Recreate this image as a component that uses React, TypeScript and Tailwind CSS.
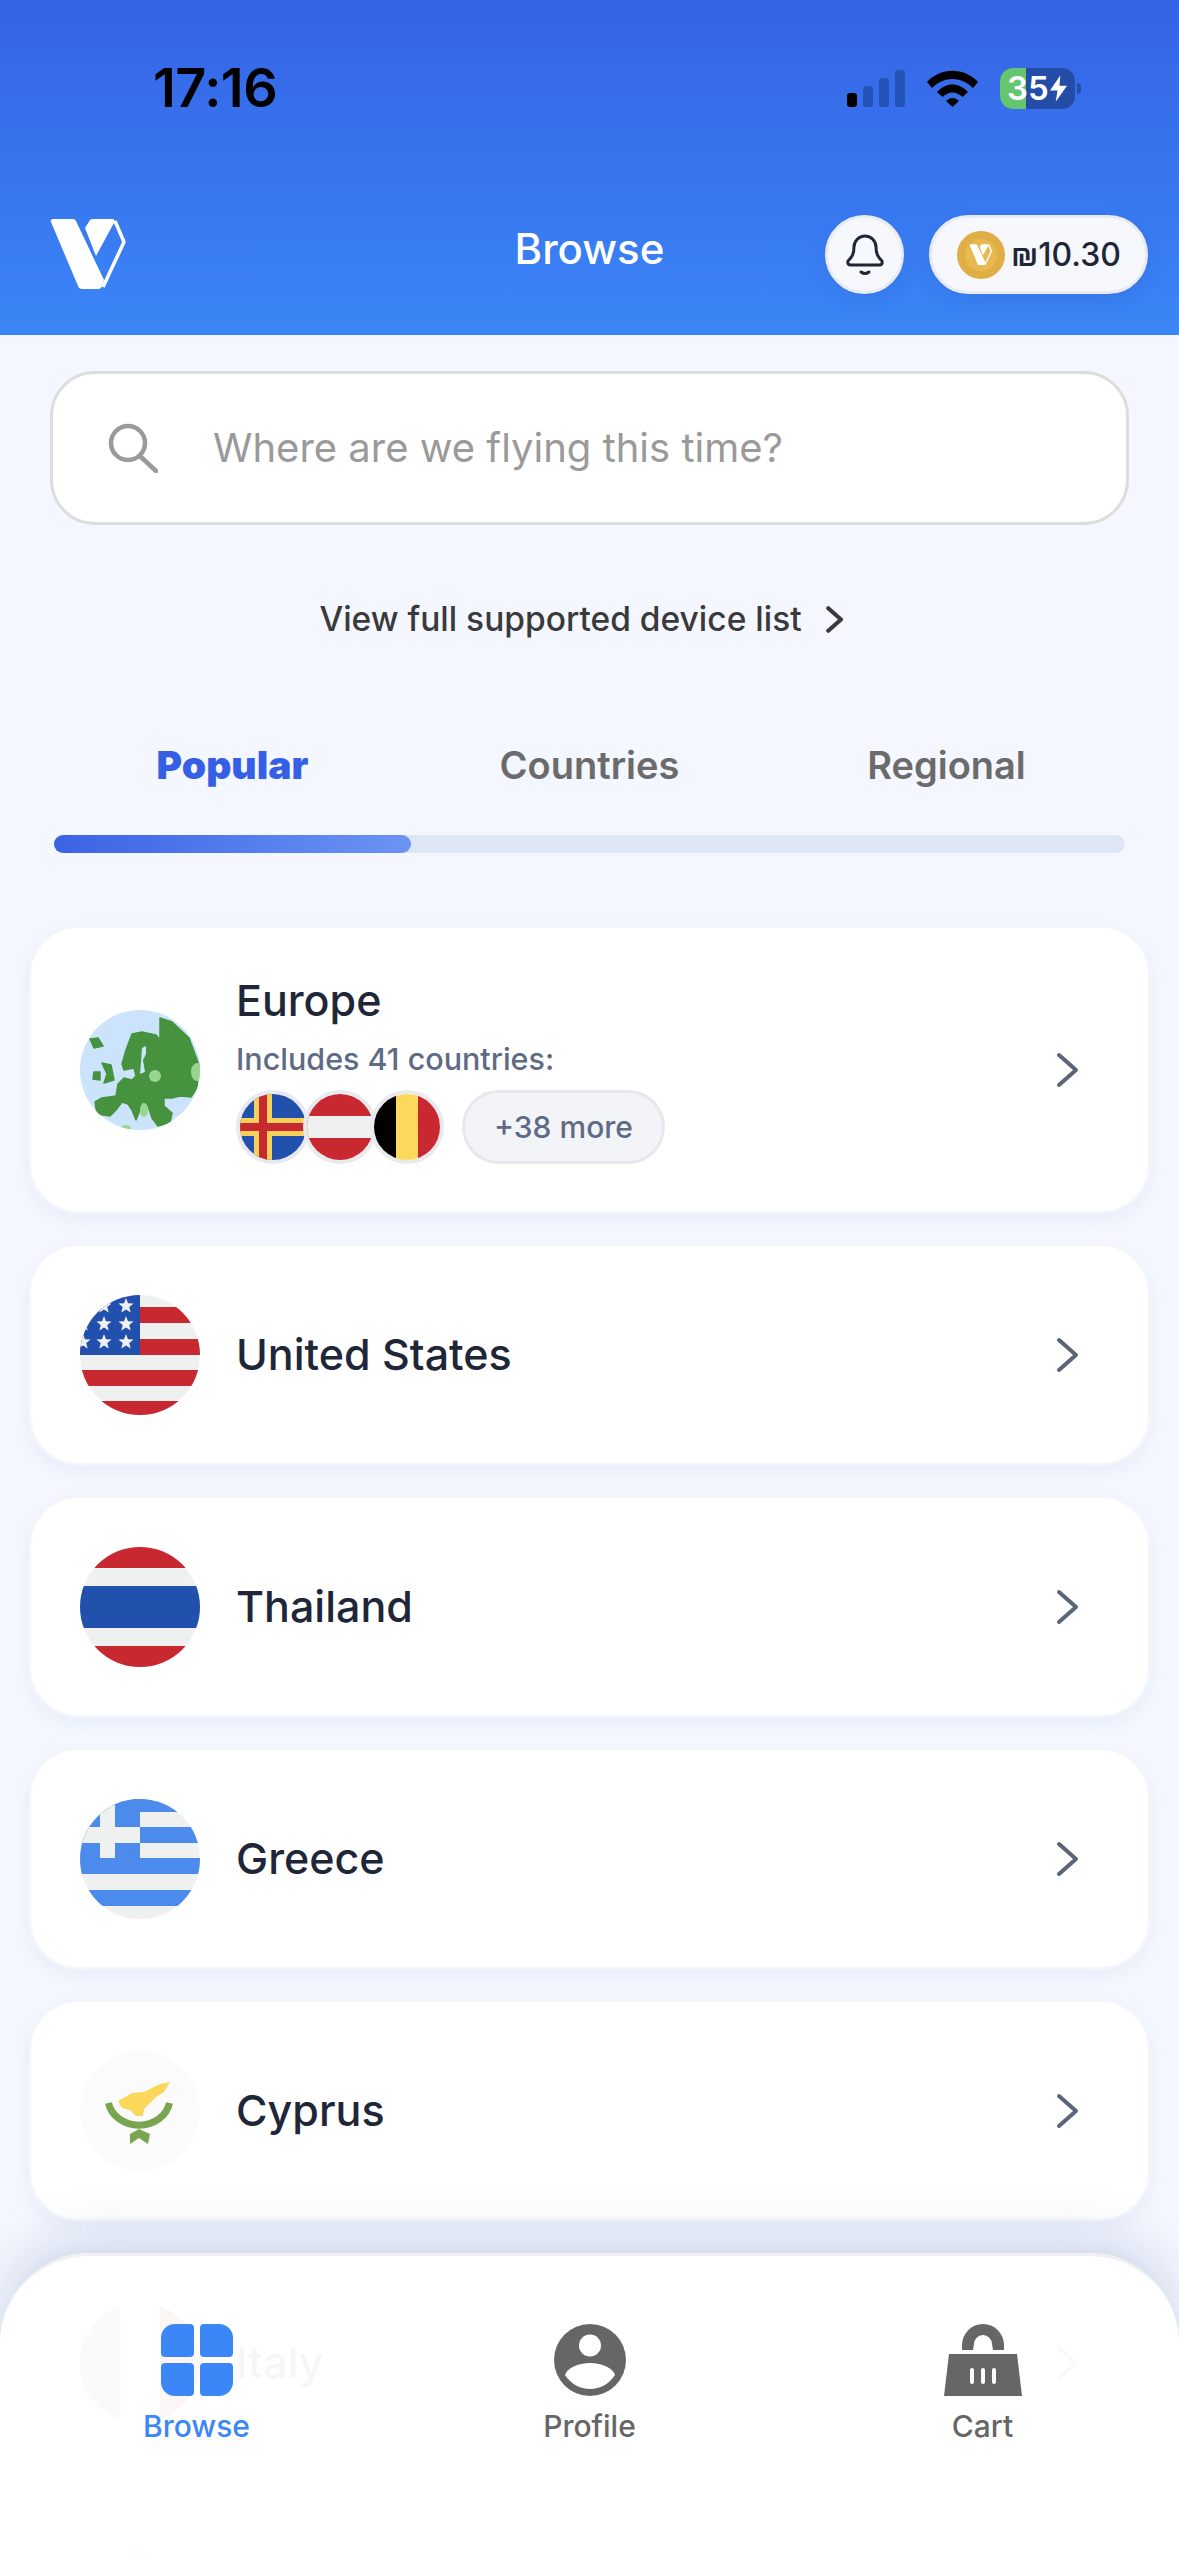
// Pantalla "Browse": cabecera, buscador, pestañas y lista de destinos
import React from 'react';

const RED = '#c8282f';
const WHITE = '#eff1f0';
const BLUE = '#2251ad';
const SKY = '#4c8aeb';

const Star: React.FC<{ x: number; y: number }> = ({ x, y }) => {
  const puntos = Array.from({ length: 10 }, (_, i) => {
    const r = i % 2 === 0 ? 8 : 3.4;
    const a = (Math.PI / 5) * i - Math.PI / 2;
    return `${x + r * Math.cos(a)},${y + r * Math.sin(a)}`;
  }).join(' ');
  return <polygon points={puntos} fill={WHITE} />;
};

const UsaFlag = () => (
  <svg viewBox="0 0 120 120" className="w-full h-full rounded-full">
    <rect width="120" height="120" fill={WHITE} />
    <rect y="12" width="120" height="16" fill={RED} />
    <rect y="44" width="120" height="16" fill={RED} />
    <rect y="75" width="120" height="16" fill={RED} />
    <rect y="106" width="120" height="14" fill={RED} />
    <rect width="60" height="60" fill={BLUE} />
    <Star x={46} y={11} />
    <Star x={24} y={11} />
    <Star x={24} y={29} />
    <Star x={46} y={29} />
    <Star x={3} y={29} />
    <Star x={24} y={47} />
    <Star x={46} y={47} />
    <Star x={3} y={47} />
  </svg>
);

const ThaiFlag = () => (
  <svg viewBox="0 0 120 120" className="w-full h-full rounded-full">
    <rect width="120" height="120" fill={WHITE} />
    <rect width="120" height="21" fill={RED} />
    <rect y="39" width="120" height="42" fill={BLUE} />
    <rect y="99" width="120" height="21" fill={RED} />
  </svg>
);

const GreekFlag = () => (
  <svg viewBox="0 0 120 120" className="w-full h-full rounded-full">
    <rect width="120" height="120" fill={WHITE} />
    <rect width="120" height="13" fill={SKY} />
    <rect y="28" width="120" height="16" fill={SKY} />
    <rect y="59" width="120" height="16" fill={SKY} />
    <rect y="91" width="120" height="16" fill={SKY} />
    <rect width="60" height="59" fill={SKY} />
    <rect x="20" width="15" height="59" fill={WHITE} />
    <rect y="28" width="60" height="16" fill={WHITE} />
  </svg>
);

const CyprusFlag = () => (
  <svg viewBox="0 0 120 120" className="w-full h-full rounded-full">
    <rect width="120" height="120" fill="#fbfbfb" />
    <path
      d="M90 31 L80 33 L64 41 L52 42 L38 50 L42 57 L50 59 L56 65 L63 65 L64 58 L70 52 L76 46 L84 41 Z"
      fill="#fbd75c"
    />
    <path d="M28.5 52 A31 27 0 0 0 89.5 52" fill="none" stroke="#7aa550" strokeWidth="7" />
    <path d="M59 78 L50 83 L50 93 L59 87 L68 93 L70 83 Z" fill="#7aa550" />
  </svg>
);

const ItalyFlag = () => (
  <svg viewBox="0 0 120 120" className="w-full h-full rounded-full">
    <rect width="120" height="120" fill={WHITE} />
    <rect width="40" height="120" fill="#5f9e46" />
    <rect x="80" width="40" height="120" fill={RED} />
  </svg>
);

const SpainFlag = () => (
  <svg viewBox="0 0 120 120" className="w-full h-full rounded-full">
    <rect width="120" height="120" fill="#fcd95d" />
    <rect width="120" height="30" fill={RED} />
    <rect y="90" width="120" height="30" fill={RED} />
  </svg>
);

const AlandFlag = () => (
  <svg viewBox="0 0 66 66" className="w-full h-full rounded-full">
    <rect width="66" height="66" fill={BLUE} />
    <rect x="14" width="18" height="66" fill="#f5d15b" />
    <rect y="24" width="66" height="18" fill="#f5d15b" />
    <rect x="19" width="8" height="66" fill={RED} />
    <rect y="29" width="66" height="8" fill={RED} />
  </svg>
);

const AustriaFlag = () => (
  <svg viewBox="0 0 66 66" className="w-full h-full rounded-full">
    <rect width="66" height="66" fill={RED} />
    <rect y="22" width="66" height="22" fill={WHITE} />
  </svg>
);

const BelgiumFlag = () => (
  <svg viewBox="0 0 66 66" className="w-full h-full rounded-full">
    <rect width="22" height="66" fill="#000000" />
    <rect x="22" width="22" height="66" fill="#fcd95d" />
    <rect x="44" width="22" height="66" fill={RED} />
  </svg>
);

// Mapa simplificado de Europa sobre fondo celeste
const EuropeGlobe = () => (
  <svg viewBox="0 0 120 120" className="w-full h-full rounded-full">
    <rect width="120" height="120" fill="#cbe3fb" />
    <g fill="#46923f" stroke="#46923f" strokeWidth="1.5" strokeLinejoin="round">
      <path d="M52 24 L62 22 L76 25 L80 30 L80 8 L92 12 L109 28 L119 55 L117 78 L111 87 L100 86 L92 88 L84 88 L84 96 L92 103 L90 113 L78 116 L72 108 L68 96 L62 92 L60 100 L56 110 L52 100 L48 94 L42 92 L36 100 L30 106 L17 104 L15 92 L22 88 L36 86 L38 74 L44 68 L52 70 L56 66 L54 58 L44 60 L42 54 L46 40 Z" />
      <path d="M22 53 L31 55 L34 70 L24 73 L27 64 Z" />
      <path d="M14 62 L20 62 L20 70 L13 69 Z" />
      <path d="M10 29 L18 28 L23 36 L14 38 Z" />
    </g>
    <path d="M62 38 L66 36 L66 44 L63 50 L65 62 L60 64 L61 52 Z" fill="#cbe3fb" />
    <ellipse cx="75" cy="66" rx="6" ry="6" fill="#99d68d" />
    <ellipse cx="117" cy="62" rx="6" ry="9" fill="#99d68d" />
    <ellipse cx="64" cy="100" rx="4" ry="7" fill="#99d68d" />
    <ellipse cx="46" cy="118" rx="5" ry="3" fill="#99d68d" />
  </svg>
);

const Chevron: React.FC<{ className?: string; color?: string; grosor?: number }> = ({
  className = '',
  color = '#5b6578',
  grosor = 4,
}) => (
  <svg viewBox="0 0 24 36" className={className} fill="none">
    <path d="M3 3 L20 18 L3 33" stroke={color} strokeWidth={grosor} strokeLinecap="round" strokeLinejoin="round" />
  </svg>
);

const SignalBars = () => (
  <div className="flex items-end gap-[6px] h-[37px]">
    <div className="w-[10px] h-[14px] rounded-[3px] bg-black" />
    <div className="w-[10px] h-[21px] rounded-[3px] bg-[#2354b6]" />
    <div className="w-[10px] h-[29px] rounded-[3px] bg-[#2354b6]" />
    <div className="w-[10px] h-[37px] rounded-[3px] bg-[#2354b6]" />
  </div>
);

const WifiIcon = () => (
  <svg viewBox="0 0 51 37" className="w-[51px] h-[37px]">
    <path d="M0 12 C14 -3 37 -3 51 12 L46 18 C34 6 17 6 5 18 Z" fill="#000" />
    <path d="M10 22 C19 12 32 12 41 22 L35.5 27 C29 21 22 21 15.5 27 Z" fill="#000" />
    <path d="M19 31 C23 27 28 27 32 31 L25.5 37 Z" fill="#000" />
  </svg>
);

const BatteryIcon = () => (
  <div className="flex items-center gap-[2px]">
    <div className="relative w-[75px] h-[41px] rounded-[13px] overflow-hidden bg-[#234da6] flex items-center">
      <div className="absolute left-0 top-0 bottom-0 w-[26px] bg-[#66c66f]" />
      <span className="relative pl-[7px] text-[33px] leading-none font-semibold text-white">35</span>
      <svg viewBox="0 0 18 28" className="relative w-[17px] h-[27px] ml-[1px]">
        <path d="M11 0 L0 16 L8 16 L6 28 L18 11 L10 11 Z" fill="#fff" />
      </svg>
    </div>
    <div className="w-[4px] h-[11px] rounded-r-full bg-[#234da6]" />
  </div>
);

const BrandLogo = () => (
  <svg viewBox="0 0 80 74" className="w-[80px] h-[74px]">
    <path
      d="M2 4 Q1 1 4 1 L24 1 Q26 1 27 3 L55 62 L53 68 Q52 71 49 71 L33 71 Q30 71 29 68 Z"
      fill="#fff"
    />
    <path d="M36 10 L41 2 Q42 1 44 1 L64 1 Q65 1 66 3 L47 38 Z" fill="#fff" />
    <path d="M66 3 L75 24 L54 69" fill="none" stroke="#fff" strokeWidth="3.5" strokeLinejoin="round" />
  </svg>
);

const BellIcon = () => (
  <svg viewBox="0 0 38 42" className="w-[38px] h-[42px]" fill="none" stroke="#1e2638" strokeLinecap="round" strokeLinejoin="round">
    <path
      d="M2 27 C6 23 8 20 8 13 A11 11 0 0 1 30 13 C30 20 32 23 36 27 Q37 31 33 31 L5 31 Q1 31 2 27 Z"
      strokeWidth="3"
    />
    <path d="M15 38 Q19 41 23 38" strokeWidth="3" />
  </svg>
);

const Coin = () => (
  <div className="w-[48px] h-[48px] rounded-full bg-[#dfae45] flex items-center justify-center">
    <div className="w-[32px] h-[32px] rounded-full bg-[#e8b94f] flex items-center justify-center">
      <svg viewBox="0 0 80 74" className="w-[24px] h-[22px]">
        <path d="M2 4 Q1 1 4 1 L24 1 Q26 1 27 3 L55 62 L53 68 Q52 71 49 71 L33 71 Q30 71 29 68 Z" fill="#fff" />
        <path d="M36 10 L41 2 Q42 1 44 1 L64 1 Q65 1 66 3 L47 38 Z" fill="#fff" />
        <path d="M66 3 L75 24 L54 69" fill="none" stroke="#fff" strokeWidth="5" />
      </svg>
    </div>
  </div>
);

const SearchIcon = () => (
  <svg viewBox="0 0 50 50" className="w-[50px] h-[50px]" fill="none" stroke="#9a9a9a" strokeWidth="4.5" strokeLinecap="round">
    <circle cx="20" cy="20" r="17" />
    <path d="M32 33 L48 48" />
  </svg>
);

const BrowseIcon = () => (
  <svg viewBox="0 0 72 72" className="w-[72px] h-[72px]" fill="#3b87f7">
    <path d="M14 0 H29 a4 4 0 0 1 4 4 V29 a4 4 0 0 1 -4 4 H4 a4 4 0 0 1 -4 -4 V14 A14 14 0 0 1 14 0 Z" />
    <path d="M43 0 H58 A14 14 0 0 1 72 14 V29 a4 4 0 0 1 -4 4 H43 a4 4 0 0 1 -4 -4 V4 a4 4 0 0 1 4 -4 Z" />
    <path d="M4 39 H29 a4 4 0 0 1 4 4 V68 a4 4 0 0 1 -4 4 H14 A14 14 0 0 1 0 58 V43 a4 4 0 0 1 4 -4 Z" />
    <path d="M43 39 H68 a4 4 0 0 1 4 4 V58 A14 14 0 0 1 58 72 H43 a4 4 0 0 1 -4 -4 V43 a4 4 0 0 1 4 -4 Z" />
  </svg>
);

const ProfileIcon = () => (
  <svg viewBox="0 0 72 72" className="w-[72px] h-[72px]">
    <circle cx="36" cy="36" r="36" fill="#666666" />
    <circle cx="36" cy="21.5" r="11" fill="#fff" />
    <path d="M11 51 C13 44 24 39 36 39 C48 39 59 44 61 51 C55 60 46 65 36 65 C26 65 17 60 11 51 Z" fill="#fff" />
  </svg>
);

const CartIcon = () => (
  <svg viewBox="0 0 78 72" className="w-[78px] h-[72px]">
    <path
      fillRule="evenodd"
      d="M18 26 L18 21 A21 21 0 0 1 60 21 L60 26 Z M29 26 L49 26 L48 20 A9 9 0 0 0 30 20 Z"
      fill="#666666"
    />
    <path d="M5 30 H73 L78 72 H0 Z" fill="#666666" />
    <path d="M28 46 V58 M39 46 V58 M50 46 V58" stroke="#fff" strokeWidth="4" strokeLinecap="round" />
  </svg>
);

interface DestinoProps {
  nombre?: string;
  bandera: React.ReactNode;
}

// Tarjeta simple de un destino
const DestinoCard: React.FC<DestinoProps> = ({ nombre, bandera }) => (
  <div className="h-[223px] shrink-0 flex items-center bg-white rounded-[50px] border-[3px] border-[#f3f5fa] shadow-[0_6px_14px_rgba(200,210,235,0.25)] pl-[49px] pr-[68px]">
    <div className="w-[120px] h-[120px] shrink-0">{bandera}</div>
    <span className="ml-[36px] flex-1 text-[43px] font-medium text-[#1e2638]">{nombre}</span>
    <Chevron className="w-[24px] h-[36px]" />
  </div>
);

const BanderaMini: React.FC<{ children: React.ReactNode; className?: string }> = ({ children, className = '' }) => (
  <div className={`w-[74px] h-[74px] rounded-full border-[4px] border-[#e9eaee] bg-white ${className}`}>{children}</div>
);

const NavItem: React.FC<{ icono: React.ReactNode; label: string; activo?: boolean }> = ({ icono, label, activo = false }) => (
  <div className="flex flex-col items-center">
    <div className="h-[72px] flex items-center">{icono}</div>
    <span className={`mt-[12px] text-[30px] leading-[36px] font-medium ${activo ? 'text-[#3b87f7]' : 'text-[#666666]'}`}>
      {label}
    </span>
  </div>
);

export default function App() {
  return (
    <div className="relative w-[1179px] h-[2556px] overflow-hidden bg-[#f4f7ff] font-['Inter',sans-serif]">
      {/* Cabecera con degradado */}
      <header className="h-[335px] bg-gradient-to-b from-[#3563e6] to-[#3b86f7]">
        <div className="flex items-center justify-between pt-[64px] pl-[153px] pr-[98px] h-[112px]">
          <span className="text-[54px] leading-none font-semibold text-black tracking-[-0.5px]">17:16</span>
          <div className="flex items-center gap-[22px]">
            <SignalBars />
            <WifiIcon />
            <BatteryIcon />
          </div>
        </div>
        <div className="mt-[103px] px-[31px] grid grid-cols-[1fr_auto_1fr] items-center">
          <div className="ml-[18px]">
            <BrandLogo />
          </div>
          <span className="mb-[12px] text-[42px] font-medium text-white">Browse</span>
          <div className="flex justify-end gap-[25px]">
            <div className="w-[79px] h-[79px] rounded-full bg-[#f6f8fd] border-[3px] border-[#e8ebf2] flex items-center justify-center shadow-[0_8px_20px_rgba(30,60,140,0.12)]">
              <BellIcon />
            </div>
            <div className="w-[219px] h-[79px] rounded-full bg-[#f6f8fd] border-[3px] border-[#e8ebf2] flex items-center pl-[25px] shadow-[0_8px_20px_rgba(30,60,140,0.12)]">
              <Coin />
              <span className="ml-[6px] text-[32px] font-medium text-[#1e2638] whitespace-nowrap">₪10.30</span>
            </div>
          </div>
        </div>
      </header>

      <main>
        {/* Buscador */}
        <div className="mt-[36px] mx-[50px] h-[154px] bg-white rounded-[45px] border-[3px] border-[#dddddd] flex items-center pl-[55px]">
          <SearchIcon />
          <span className="ml-[55px] text-[40px] text-[#9a9a9a]">Where are we flying this time?</span>
        </div>

        <div className="mt-[73px] pr-[16px] flex items-center justify-center gap-[24px]">
          <span className="text-[33.5px] leading-[42px] font-medium text-[#3a3a3a]">View full supported device list</span>
          <Chevron className="w-[18px] h-[27px]" color="#3a3a3a" grosor={5.5} />
        </div>

        {/* Pestañas */}
        <div className="mt-[102px] mx-[54px]">
          <div className="flex">
            <span className="flex-1 text-center text-[39px] leading-[46px] font-black text-[#3560e5]">Popular</span>
            <span className="flex-1 text-center text-[38px] leading-[46px] font-semibold text-[#6b6b6b]">Countries</span>
            <span className="flex-1 text-center text-[38px] leading-[46px] font-semibold text-[#6b6b6b]">Regional</span>
          </div>
          <div className="mt-[47px] h-[18px] rounded-full bg-[#dfe6f6]">
            <div className="w-1/3 h-full rounded-full bg-gradient-to-r from-[#3a63e4] to-[#6c93f3]" />
          </div>
        </div>

        {/* Lista de destinos */}
        <div className="mt-[72px] mx-[28px] flex flex-col gap-[29px]">
          <div className="h-[289px] shrink-0 flex items-center bg-white rounded-[50px] border-[3px] border-[#f3f5fa] shadow-[0_6px_14px_rgba(200,210,235,0.25)] pl-[49px] pr-[68px]">
            <div className="w-[120px] h-[120px] shrink-0">
              <EuropeGlobe />
            </div>
            <div className="ml-[36px] flex-1">
              <p className="text-[43px] leading-[50px] font-medium text-[#1e2638]">Europe</p>
              <p className="mt-[17px] text-[30.5px] leading-[34px] font-medium text-[#5f6b85]">Includes 41 countries:</p>
              <div className="mt-[14px] flex items-center">
                <BanderaMini>
                  <AlandFlag />
                </BanderaMini>
                <BanderaMini className="-ml-[7px]">
                  <AustriaFlag />
                </BanderaMini>
                <BanderaMini className="-ml-[7px]">
                  <BelgiumFlag />
                </BanderaMini>
                <div className="ml-[18px] w-[203px] h-[74px] rounded-full bg-[#f3f4f7] border-[3px] border-[#e7e8ed] flex items-center justify-center">
                  <span className="text-[30px] font-medium text-[#5f6b85]">+38 more</span>
                </div>
              </div>
            </div>
            <Chevron className="w-[24px] h-[36px]" />
          </div>
          <DestinoCard nombre="United States" bandera={<UsaFlag />} />
          <DestinoCard nombre="Thailand" bandera={<ThaiFlag />} />
          <DestinoCard nombre="Greece" bandera={<GreekFlag />} />
          <DestinoCard nombre="Cyprus" bandera={<CyprusFlag />} />
          <DestinoCard nombre="Italy" bandera={<ItalyFlag />} />
          <DestinoCard bandera={<SpainFlag />} />
        </div>
      </main>

      {/* Barra inferior flotante, translúcida sobre la lista */}
      <nav className="absolute left-0 right-0 bottom-0 h-[303px] rounded-t-[90px] bg-white/[0.96] border-t-[3px] border-[#eef0f2] shadow-[0_-14px_50px_rgba(120,135,175,0.28)] pt-[68px] grid grid-cols-3 content-start">
        <NavItem icono={<BrowseIcon />} label="Browse" activo />
        <NavItem icono={<ProfileIcon />} label="Profile" />
        <NavItem icono={<CartIcon />} label="Cart" />
      </nav>
    </div>
  );
}
